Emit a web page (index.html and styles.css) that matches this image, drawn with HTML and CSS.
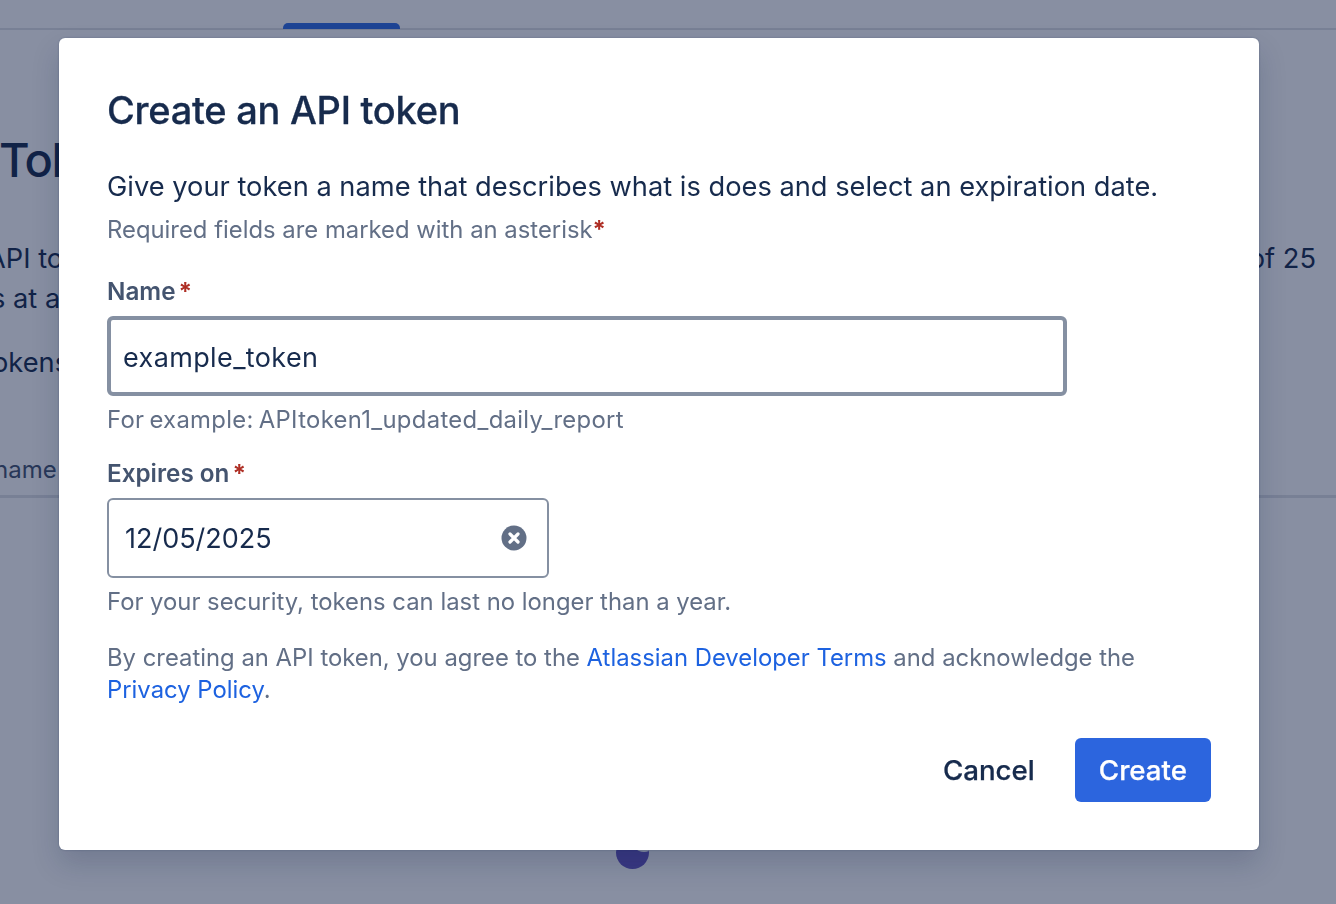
FILE: index.html
```html
<!DOCTYPE html>
<html lang="en">
<head>
<meta charset="utf-8">
<title>Create an API token</title>
<link rel="stylesheet" href="styles.css">
</head>
<body>
<div class="page">
  <header class="topbar"><span class="tab"></span></header>
  <main class="content">
    <h1 class="page-title">Tok</h1>
    <p class="intro first"><span class="api">API to</span><span>of 25</span></p>
    <p class="intro second">s at a</p>
    <p class="intro third">okens</p>
    <div class="table-head">name</div>
    <div class="loader"><span class="notch"></span></div>
  </main>
</div>
<div class="overlay"></div>
<section class="modal">
  <h2 class="modal-title">Create an API token</h2>
  <p class="lead">Give your token a name that describes what is does and select an expiration date.</p>
  <p class="hint required-note">Required fields are marked with an asterisk<span class="star">*</span></p>
  <label class="label name-label">Name<span class="star">*</span></label>
  <div class="input focused">example_token</div>
  <p class="hint below example">For example: APItoken1_updated_daily_report</p>
  <label class="label expires-label">Expires on<span class="star">*</span></label>
  <div class="input date"><span>12/05/2025</span>
    <svg class="clear" viewBox="0 0 26 26" width="26" height="26"><circle cx="13" cy="13" r="12.5" fill="#626f86"/><path d="M9 9l8 8M17 9l-8 8" stroke="#fff" stroke-width="3.2" stroke-linecap="round"/></svg>
  </div>
  <p class="hint below">For your security, tokens can last no longer than a year.</p>
  <p class="hint terms">By creating an API token, you agree to the <a href="#">Atlassian Developer Terms</a> and acknowledge the <a href="#">Privacy Policy</a>.</p>
  <div class="actions">
    <button class="btn cancel">Cancel</button>
    <button class="btn create">Create</button>
  </div>
</section>
</body>
</html>
```

FILE: styles.css
```css
* { box-sizing: border-box; }
html, body { margin: 0; height: 100%; }
body { font-family: Inter, "Liberation Sans", sans-serif; color: #172b4d; background: #fff; overflow: hidden; }
.page { height: 904px; overflow: hidden; }
.topbar { height: 30px; border-bottom: 2px solid #dfe1e6; display: flex; align-items: flex-end; padding-left: 283px; }
.tab { width: 117px; height: 6px; margin-bottom: -1px; background: #306ce3; border-radius: 5px 5px 0 0; }
.content { padding-top: 100px; }
.page-title { margin: 0 0 0 -1px; font-size: 47px; font-weight: 500; letter-spacing: -1.5px; line-height: 60px; white-space: nowrap; }
.intro { margin: 0; font-size: 27.26px; line-height: 40px; white-space: nowrap; }
.first { margin: 49px 20px 0 -13px; display: flex; justify-content: space-between; }
.second { margin-left: -9px; }
.third { margin: 24px 0 0 -8px; }
.table-head { margin: 72px 0 0 -6px; height: 43px; font-size: 24px; color: #44546f; border-bottom: 3px solid #dfe1e6; white-space: nowrap; }
.loader { position: relative; overflow: hidden; margin: 338px 0 0 616px; width: 33px; height: 33px; border-radius: 50%; background: #6554c0; }
.notch { position: absolute; left: 21px; top: 10px; width: 14px; height: 6px; border-radius: 50%; background: #fff; }
.overlay { position: fixed; inset: 0; background: rgba(13, 27, 66, 0.49); }
.modal { position: fixed; left: 59px; top: 38px; width: 1200px; height: 812px; background: #fff; border-radius: 6px; padding: 48px; box-shadow: 0 14px 28px rgba(9,30,66,.18), 0 0 2px rgba(9,30,66,.3); }
.modal-title { margin: 0; font-size: 38px; font-weight: 500; letter-spacing: -0.28px; line-height: 48px; color: #172b4d; -webkit-text-stroke: .3px #172b4d; }
.lead { margin: 33px 0 0; font-size: 27.26px; line-height: 40px; }
.hint { margin: 0; font-size: 23.85px; line-height: 32px; color: #626f86; }
.required-note { margin-top: 7px; }
.label { display: block; font-size: 24.25px; font-weight: 600; line-height: 32px; color: #44546f; }
.name-label { margin-top: 30px; }
.expires-label { margin-top: 22px; }
.star { color: #ae2e24; font-weight: 700; }
.label .star { margin-left: 3px; }
.input { display: flex; align-items: center; justify-content: space-between; background: #fff; font-size: 27px; }
.focused { margin-top: 8px; width: 960px; height: 80px; border: 4px solid #8590a2; border-radius: 6px; padding: 2px 12px 0; letter-spacing: .38px; }
.date { margin-top: 8px; width: 442px; height: 80px; border: 2px solid #8590a2; border-radius: 6px; padding: 0 20px 0 16px; }
.clear { display: block; }
.below { margin-top: 8px; }
.example { letter-spacing: .32px; word-spacing: -2px; }
.terms { margin-top: 24px; }
.terms a { color: #1d62e0; text-decoration: none; }
.actions { display: flex; justify-content: flex-end; gap: 16px; margin-top: 32px; }
.btn { height: 64px; border: 0; border-radius: 6px; font: 500 27.7px Inter, "Liberation Sans", sans-serif; padding: 0 24px; cursor: pointer; -webkit-text-stroke: .25px currentColor; }
.cancel { background: transparent; color: #172b4d; }
.create { background: #2c65de; color: #fff; }
```
